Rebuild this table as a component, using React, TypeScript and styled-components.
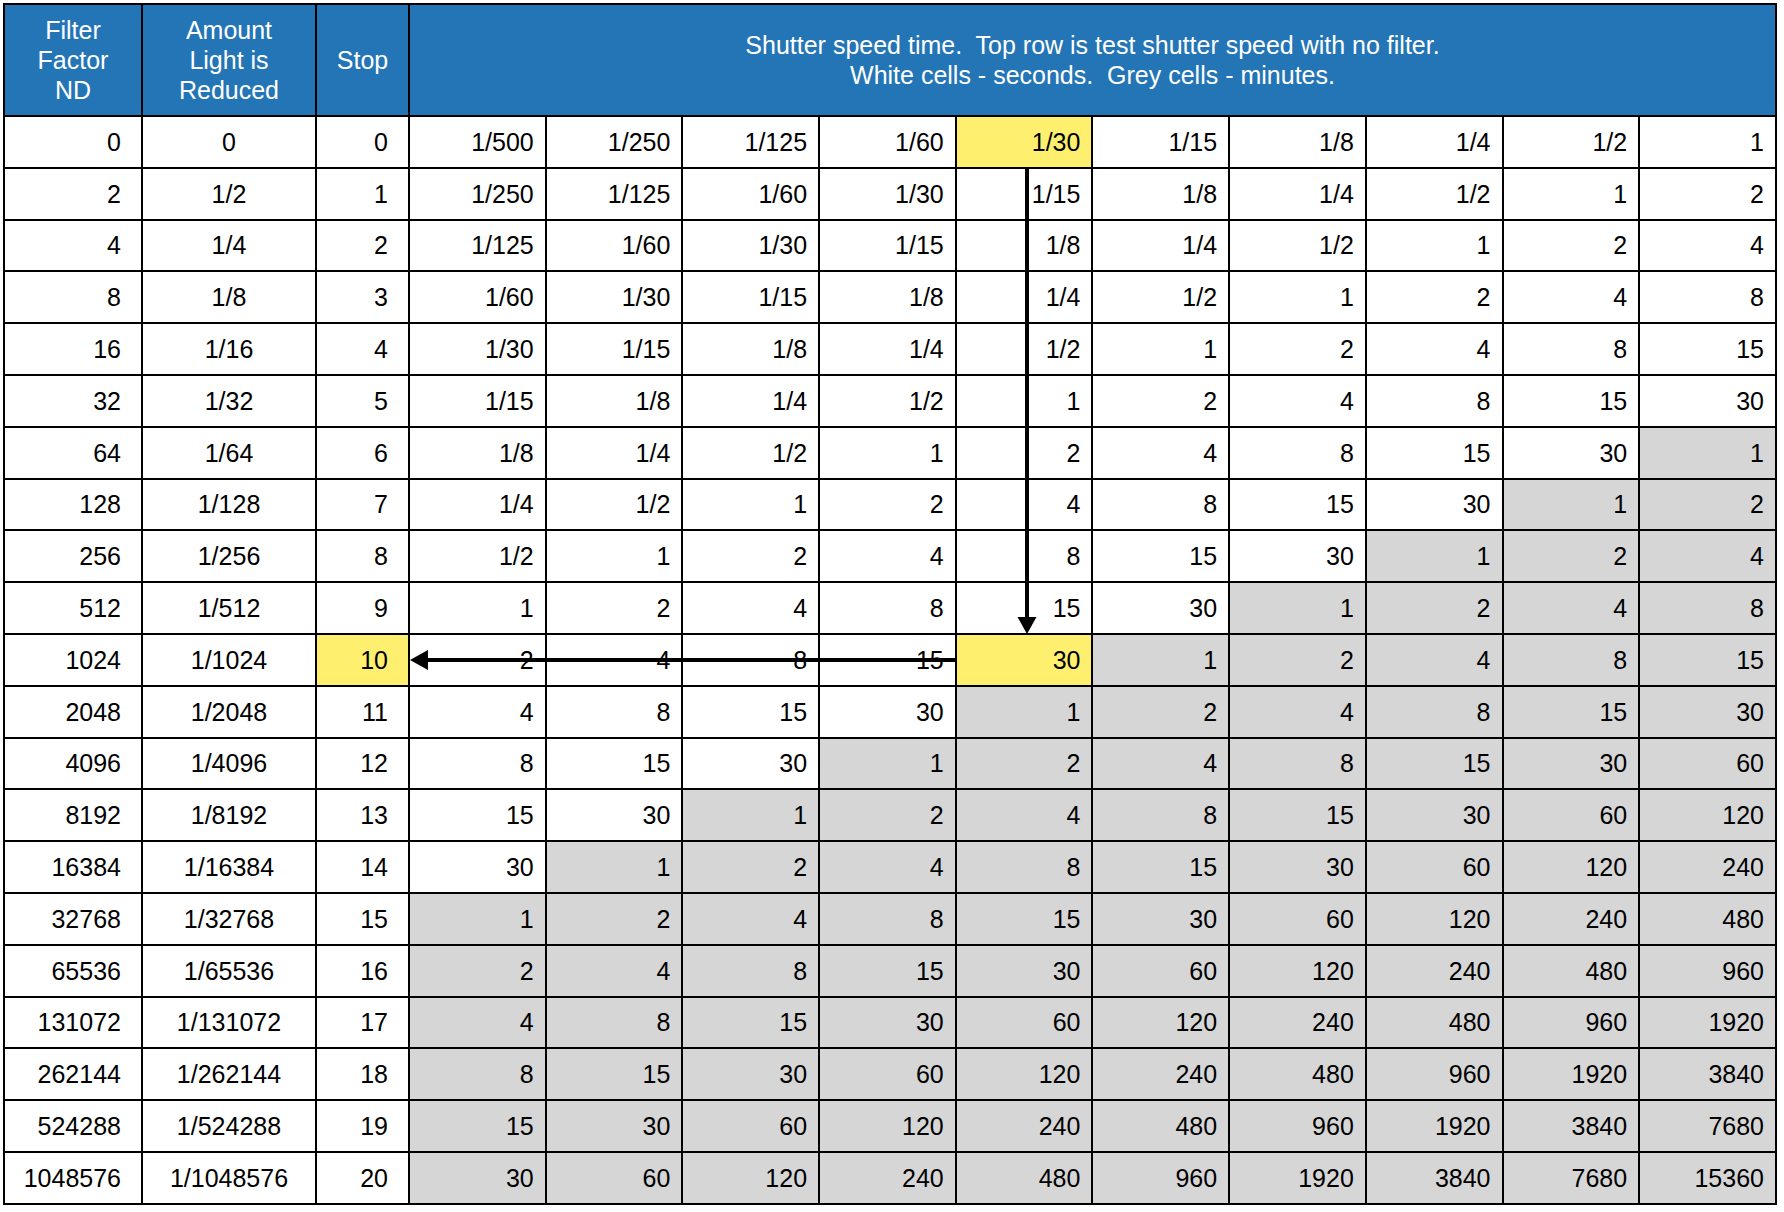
import React from 'react'
import styled, { createGlobalStyle } from 'styled-components'

const GlobalStyle = createGlobalStyle`
  html, body {
    margin: 0;
    padding: 0;
    background: #fff;
  }
  body {
    font-family: 'Liberation Sans', Arial, Helvetica, sans-serif;
    color: #000;
  }
`

// shutter times, in seconds up to 30 and in minutes after that
const SECONDS = ['1/500', '1/250', '1/125', '1/60', '1/30', '1/15', '1/8', '1/4', '1/2', '1', '2', '4', '8', '15', '30']
const MINUTES = ['1', '2', '4', '8', '15', '30', '60', '120', '240', '480', '960', '1920', '3840', '7680', '15360']

type Tone = 'white' | 'grey' | 'yellow'

const STOPS = Array.from({ length: 21 }, (_, i) => i)
const DATA_COLS = Array.from({ length: 10 }, (_, i) => i)

const speedAt = (stop: number, col: number) => {
  const i = stop + col
  return i < SECONDS.length
    ? { text: SECONDS[i], grey: false }
    : { text: MINUTES[i - SECONDS.length], grey: true }
}

const marked = new Set(['0-4', '10-4'])

const tones: Record<Tone, string> = {
  white: '#ffffff',
  grey: '#d6d6d6',
  yellow: '#fef06e',
}

const App: React.FC = () => (
  <Page>
    <GlobalStyle />
    <Table>
      <colgroup>
        <col style={{ width: 138 }} />
        <col style={{ width: 174 }} />
        <col style={{ width: 93 }} />
        {DATA_COLS.map(c => (
          <col key={c} style={{ width: 136.7 }} />
        ))}
      </colgroup>
      <thead>
        <tr>
          <HeadCell>
            Filter
            <br />
            Factor
            <br />
            ND
          </HeadCell>
          <HeadCell>
            Amount
            <br />
            Light is
            <br />
            Reduced
          </HeadCell>
          <HeadCell>Stop</HeadCell>
          <HeadCell colSpan={10}>
            {'Shutter speed time.  Top row is test shutter speed with no filter.\nWhite cells - seconds.  Grey cells - minutes.'}
          </HeadCell>
        </tr>
      </thead>
      <tbody>
        {STOPS.map(stop => (
          <tr key={stop}>
            <Cell $align="right" $pad={20}>
              {stop === 0 ? 0 : 2 ** stop}
            </Cell>
            <Cell $align="center">{stop === 0 ? '0' : `1/${2 ** stop}`}</Cell>
            <Cell $align="right" $pad={20} $tone={stop === 10 ? 'yellow' : 'white'}>
              {stop}
            </Cell>
            {DATA_COLS.map(col => {
              const { text, grey } = speedAt(stop, col)
              const tone: Tone = marked.has(`${stop}-${col}`) ? 'yellow' : grey ? 'grey' : 'white'
              return (
                <Cell key={col} $align="right" $pad={11} $tone={tone}>
                  {text}
                </Cell>
              )
            })}
          </tr>
        ))}
      </tbody>
    </Table>
    <Arrows viewBox="0 0 1784 1212" width="1784" height="1212">
      <line x1="1027" y1="169" x2="1027" y2="619" stroke="#000" strokeWidth="4" />
      <polygon points="1017.5,617 1036.5,617 1027,634" fill="#000" />
      <line x1="956" y1="660" x2="426" y2="660" stroke="#000" strokeWidth="4" />
      <polygon points="410,660 428,650 428,670" fill="#000" />
    </Arrows>
  </Page>
)

const Page = styled.div`
  position: relative;
  width: 1784px;
  height: 1212px;
  padding: 3px;
  box-sizing: border-box;
`

const Table = styled.table`
  width: 1774px;
  table-layout: fixed;
  border-collapse: separate;
  border-spacing: 0;
  border-top: 2px solid #000;
  border-left: 2px solid #000;
`

const HeadCell = styled.th`
  height: 110px;
  padding: 0;
  background: #2475b6;
  color: #fff;
  font-size: 25px;
  font-weight: 400;
  line-height: 30px;
  text-align: center;
  vertical-align: middle;
  white-space: pre-wrap;
  border-right: 2px solid #000;
  border-bottom: 2px solid #000;
`

const Cell = styled.td<{ $align: 'right' | 'center'; $pad?: number; $tone?: Tone }>`
  height: 49.8px;
  padding: 0 ${p => p.$pad ?? 0}px 0 0;
  background: ${p => tones[p.$tone ?? 'white']};
  font-size: 25px;
  line-height: 28px;
  text-align: ${p => p.$align};
  vertical-align: middle;
  white-space: nowrap;
  overflow: hidden;
  border-right: 2px solid #000;
  border-bottom: 2px solid #000;
`

const Arrows = styled.svg`
  position: absolute;
  top: 0;
  left: 0;
  pointer-events: none;
`

export default App
